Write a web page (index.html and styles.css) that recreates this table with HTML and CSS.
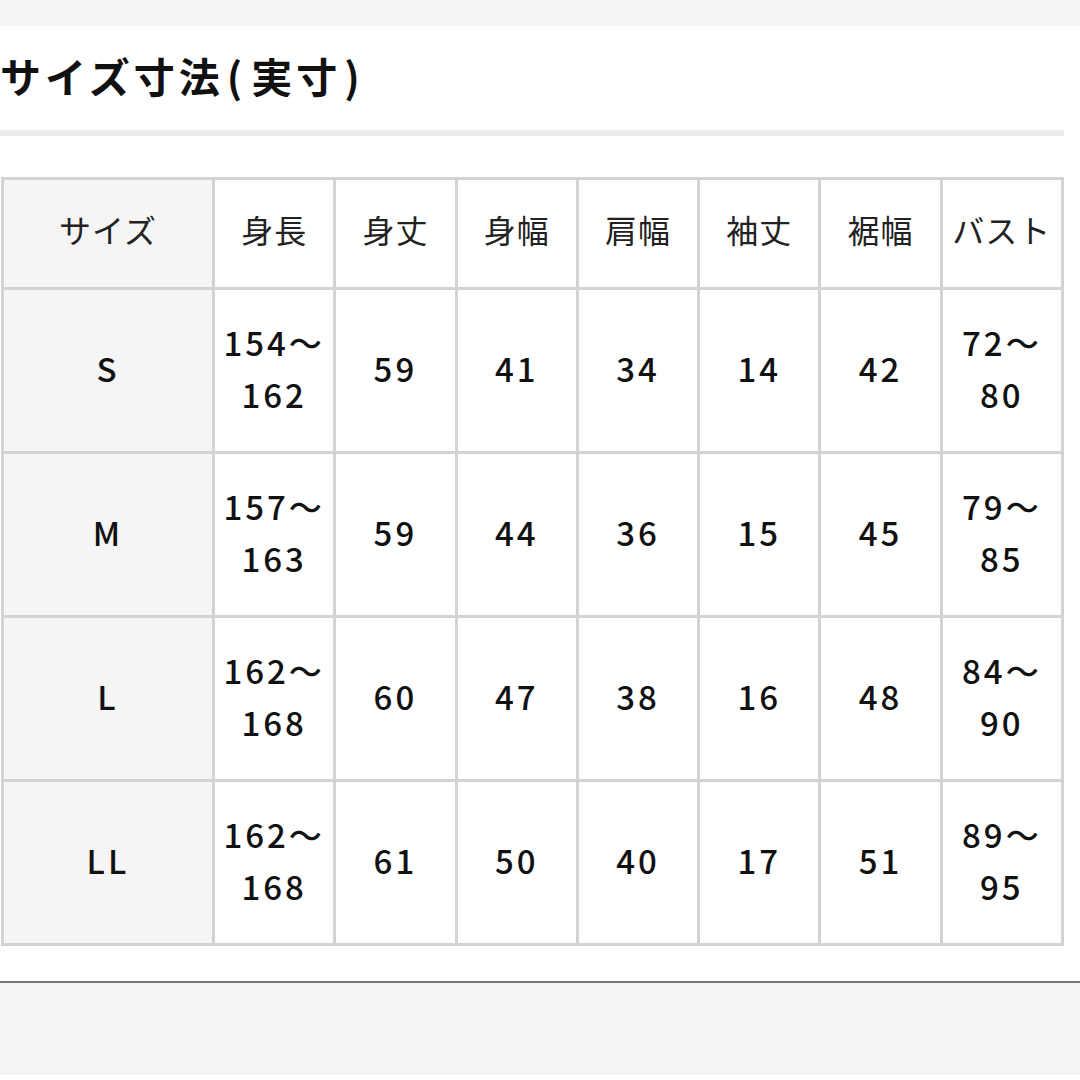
FILE: index.html
```html
<!DOCTYPE html>
<html lang="ja">
<head>
<meta charset="utf-8">
<link rel="stylesheet" href="styles.css">
</head>
<body>
<div class="topbar"></div>
<h1 class="title">サイズ寸法<span class="paren">(</span>実寸<span class="paren">)</span></h1>
<div class="divider"></div>
<table class="size-table">
  <colgroup>
    <col class="c-first">
    <col><col><col><col><col><col><col>
  </colgroup>
  <thead>
    <tr>
      <th class="first">サイズ</th>
      <th>身長</th>
      <th>身丈</th>
      <th>身幅</th>
      <th>肩幅</th>
      <th>袖丈</th>
      <th>裾幅</th>
      <th>バスト</th>
    </tr>
  </thead>
  <tbody>
    <tr>
      <td class="first">S</td>
      <td>154～<br>162</td>
      <td>59</td><td>41</td><td>34</td><td>14</td><td>42</td>
      <td>72～<br>80</td>
    </tr>
    <tr>
      <td class="first">M</td>
      <td>157～<br>163</td>
      <td>59</td><td>44</td><td>36</td><td>15</td><td>45</td>
      <td>79～<br>85</td>
    </tr>
    <tr>
      <td class="first">L</td>
      <td>162～<br>168</td>
      <td>60</td><td>47</td><td>38</td><td>16</td><td>48</td>
      <td>84～<br>90</td>
    </tr>
    <tr>
      <td class="first">LL</td>
      <td>162～<br>168</td>
      <td>61</td><td>50</td><td>40</td><td>17</td><td>51</td>
      <td>89～<br>95</td>
    </tr>
  </tbody>
</table>
<div class="footer"></div>
</body>
</html>
```

FILE: styles.css
```css
html, body {
  margin: 0;
  padding: 0;
  background: #ffffff;
  font-family: "Noto Sans CJK JP", "Noto Sans", sans-serif;
  color: #111111;
}

.topbar {
  height: 26px;
  background: #f4f4f4;
}

.title {
  margin: 0;
  padding: 0 0 6px 0;
  height: 98px;
  line-height: 98px;
  font-size: 41px;
  font-weight: 700;
  letter-spacing: 4px;
  color: #111111;
  white-space: nowrap;
}

.title .paren {
  font-weight: 700;
  margin: 0 5px 0 3px;
}

.divider {
  width: 1064px;
  height: 6px;
  background: #ebebeb;
}

.size-table {
  margin: 41px 0 0 1px;
  width: 1063px;
  border-collapse: collapse;
  table-layout: fixed;
}

.size-table .c-first {
  width: 211px;
}

.size-table th,
.size-table td {
  border: 3px solid #d3d3d3;
  text-align: center;
  vertical-align: middle;
}

.size-table th {
  height: 97px;
  padding: 0 0 10px 0;
  font-size: 32px;
  font-weight: 400;
  letter-spacing: 1px;
  color: #222222;
}

.size-table td {
  height: 156px;
  padding: 0 0 5px 0;
  font-size: 33px;
  line-height: 52px;
  font-weight: 500;
  letter-spacing: 3px;
  color: #111111;
}

.size-table .first {
  background: #f5f5f5;
}

.footer {
  margin-top: 35px;
  height: 92px;
  border-top: 2px solid #777777;
  background: #f4f4f4;
}
```
